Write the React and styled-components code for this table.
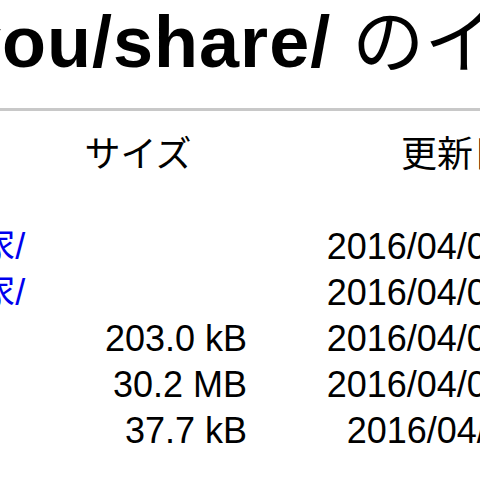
import React from "react";
import styled, { createGlobalStyle } from "styled-components";

const GlobalStyle = createGlobalStyle`
  html, body {
    margin: 0;
    padding: 0;
    background: #fff;
  }
  body {
    width: 480px;
    height: 480px;
    overflow: hidden;
    font-family: "Liberation Sans", Arial, "Noto Sans CJK JP", sans-serif;
    color: #000;
  }
`;

const Page = styled.div`
  margin-left: -277px;
  width: 1100px;
`;

const Title = styled.h1`
  margin: 0;
  padding-top: 2px;
  font-size: 72px;
  line-height: 80px;
  font-weight: bold;
  letter-spacing: 1px;
  white-space: nowrap;
`;

const TitleJa = styled.span`
  font-weight: normal;
  letter-spacing: 0;
`;

const Rule = styled.hr`
  margin: 26px 0 0;
  border: 0;
  height: 3px;
  background: #c8c8c8;
`;

const Listing = styled.div`
  display: grid;
  grid-template-columns: 306px 218px 452px;
  margin-top: 21px;
  font-size: 36px;
  line-height: 46px;
  white-space: nowrap;
`;

const HeadCell = styled.div`
  font-weight: normal;
  text-align: center;
`;

const NameCell = styled.div`
  padding-left: 28px;
  text-align: left;
`;

const SizeCell = styled.div`
  text-align: right;
`;

const DateCell = styled.div`
  text-align: right;
  padding-right: 42px;
`;

const FileLink = styled.a`
  color: #0000ee;
  text-decoration: none;
`;

const entries = [
  { name: "../", size: "", date: "" },
  { name: "2016年4月_実家/", size: "", date: "2016/04/08 10:12:33" },
  { name: "2016年3月_実家/", size: "", date: "2016/04/08 10:15:02" },
  { name: "写真.jpg", size: "203.0 kB", date: "2016/04/08 10:21:47" },
  { name: "動画.mp4", size: "30.2 MB", date: "2016/04/08 10:24:10" },
  { name: "メモ.pdf", size: "37.7 kB", date: "2016/04/08 9:05:51" },
];

export default function App() {
  return (
    <Page>
      <GlobalStyle />
      <Title>
        /home/you/share/ <TitleJa>のインデックス</TitleJa>
      </Title>
      <Rule />
      <Listing>
        <HeadCell>名前</HeadCell>
        <HeadCell>サイズ</HeadCell>
        <HeadCell>更新日時</HeadCell>
        {entries.map((entry) => (
          <React.Fragment key={entry.name}>
            <NameCell>
              <FileLink href="#">{entry.name}</FileLink>
            </NameCell>
            <SizeCell>{entry.size}</SizeCell>
            <DateCell>{entry.date}</DateCell>
          </React.Fragment>
        ))}
      </Listing>
    </Page>
  );
}
